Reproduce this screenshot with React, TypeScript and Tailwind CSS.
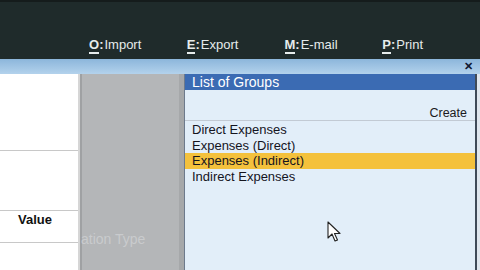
import React from "react";

const menu = [
  { k: "O", t: "Import" },
  { k: "E", t: "Export" },
  { k: "M", t: "E-mail" },
  { k: "P", t: "Print" },
];

const items = ["Direct Expenses", "Expenses (Direct)", "Expenses (Indirect)", "Indirect Expenses"];

export default function App() {
  return (
    <div
      className="relative w-[480px] h-[270px] overflow-hidden flex flex-col bg-white"
      style={{ fontFamily: '"Liberation Sans", Arial, sans-serif' }}
    >
      {/* top dark bar */}
      <div className="h-[59px] bg-[#1f2b2b] border-t-[2px] border-[#151c1c] flex items-end pl-[89px] pb-[5px]">
        {menu.map((m) => (
          <div key={m.k} className="w-[98px] flex items-end text-[13px] leading-[16px] text-[#e6ecec]">
            <span className="font-bold border-b-[2px] border-[#e6ecec] leading-[14px]">{m.k}</span>
            <span className="font-bold mr-[1px] leading-[14px] pb-[2px]">:</span>
            <span className="leading-[14px] pb-[2px]">{m.t}</span>
          </div>
        ))}
      </div>

      {/* light blue band */}
      <div className="relative h-[15px] bg-gradient-to-b from-[#8cb6db] to-[#b3d2ec] flex justify-end pr-[7px] items-center">
        <span className="text-[11px] leading-[11px] font-bold text-[#101830]">✕</span>
      </div>

      {/* main */}
      <div className="flex flex-1">
        {/* left white panel */}
        <div className="w-[80px] bg-white border-r-[2px] border-[#d6d6d6] flex flex-col">
          <div className="h-[77px] border-b border-[#c8c8c8]" />
          <div className="h-[60px] border-b border-[#c8c8c8]" />
          <div className="h-[32px] border-b border-[#c8c8c8] pt-[1px] pl-[18px] text-[13px] leading-[16px] font-bold text-[#111]">
            Value
          </div>
          <div className="flex-1" />
        </div>

        {/* gray panel */}
        <div className="w-[104px] bg-[#b4b6b8] border-l-[2px] border-[#9fa1a3] border-r-[5px] border-r-[#a6a8aa] flex flex-col">
          <div className="h-[157px]" />
          <div className="text-[14px] text-[#c9cbcd] leading-[16px] -ml-[1px]">ation Type</div>
          <div className="flex-1" />
        </div>

        {/* list panel */}
        <div className="w-[291px] bg-[#e2eef9] border-l border-[#6d7a8c] flex flex-col">
          <div className="h-[16px] bg-[#3b6bb3] text-white text-[14px] leading-[16px] pl-[7px]">List of Groups</div>
          <div className="h-[31px] border-b border-[#c2cad4] flex items-end justify-end pr-[8px] text-[12.5px] leading-[13px] text-[#1a1a22]">
            Create
          </div>
          <div className="flex flex-col pt-[1px]">
            {items.map((it, i) => (
              <div
                key={it}
                className={
                  "h-[15.5px] pl-[7px] text-[13px] leading-[15.5px] text-[#14141e] " +
                  (i === 2 ? "bg-[#f4c13c]" : "")
                }
              >
                {it}
              </div>
            ))}
          </div>
        </div>

        {/* right strip */}
        <div className="flex-1 border-l-[2px] border-[#3f4a58] bg-[#dfe6ee]" />
      </div>

      {/* cursor */}
      <svg className="absolute left-[327px] top-[221px]" width="14" height="22" viewBox="0 0 14 22">
        <path d="M1 1 L1 17 L5 13 L8 20 L10.5 19 L7.5 12.5 L13 12.5 Z" fill="#fff" stroke="#222" strokeWidth="1.1" strokeLinejoin="round" />
      </svg>
    </div>
  );
}
